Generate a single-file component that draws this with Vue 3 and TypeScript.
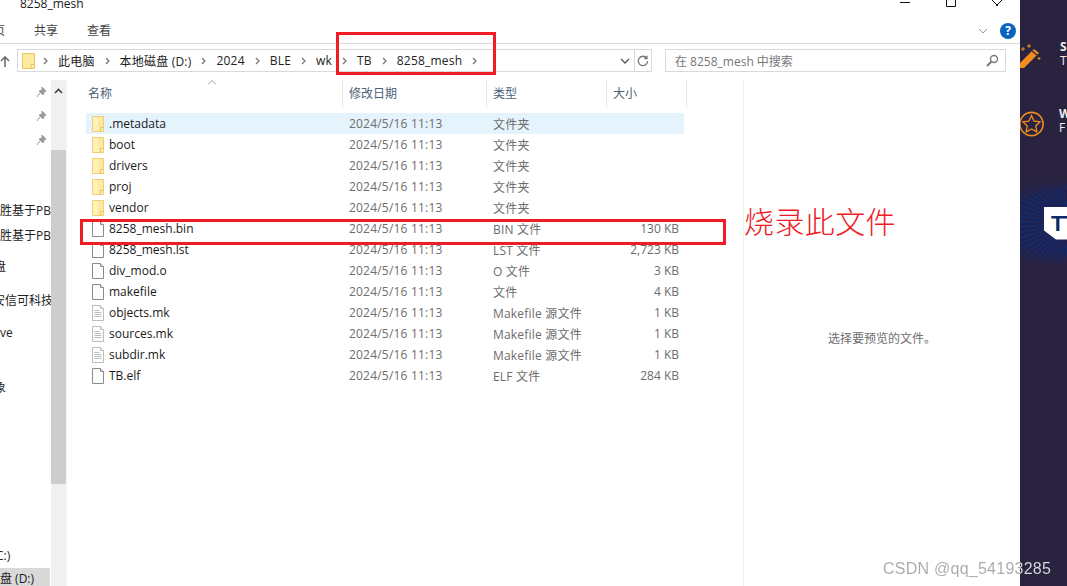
<script setup lang="ts">
type Row = { name: string; icon: 'folder' | 'file' | 'text'; type: string; size: string }

const date = '2024/5/16 11:13'
const crumbs = ['此电脑', '本地磁盘 (D:)', '2024', 'BLE', 'wk', 'TB', '8258_mesh']

const rows: Row[] = [
  { name: '.metadata', icon: 'folder', type: '文件夹', size: '' },
  { name: 'boot', icon: 'folder', type: '文件夹', size: '' },
  { name: 'drivers', icon: 'folder', type: '文件夹', size: '' },
  { name: 'proj', icon: 'folder', type: '文件夹', size: '' },
  { name: 'vendor', icon: 'folder', type: '文件夹', size: '' },
  { name: '8258_mesh.bin', icon: 'file', type: 'BIN 文件', size: '130 KB' },
  { name: '8258_mesh.lst', icon: 'file', type: 'LST 文件', size: '2,723 KB' },
  { name: 'div_mod.o', icon: 'file', type: 'O 文件', size: '3 KB' },
  { name: 'makefile', icon: 'file', type: '文件', size: '4 KB' },
  { name: 'objects.mk', icon: 'text', type: 'Makefile 源文件', size: '1 KB' },
  { name: 'sources.mk', icon: 'text', type: 'Makefile 源文件', size: '1 KB' },
  { name: 'subdir.mk', icon: 'text', type: 'Makefile 源文件', size: '1 KB' },
  { name: 'TB.elf', icon: 'file', type: 'ELF 文件', size: '284 KB' },
]

// 左侧导航只露出一截文字，gap 是和上一项的距离
const navItems = [
  { label: '胜基于PB', gap: 123, left: 0 },
  { label: '胜基于PB', gap: 9, left: 0 },
  { label: '盘', gap: 15, left: -6 },
  { label: '安信可科技', gap: 18, left: -7 },
  { label: 've', gap: 16, left: 0 },
  { label: '象', gap: 39, left: -6 },
  { label: 'C:)', gap: 152, left: -4 },
]
</script>

<template>
  <div class="screen">
    <div class="window">
      <div class="titlebar">
        <span class="title">8258_mesh</span>
        <div class="win-btns">
          <svg width="12" height="4" viewBox="0 0 12 4"><path d="M1 2.500h10" stroke="#111" fill="none" /></svg>
          <svg width="12" height="8" viewBox="0 0 12 8"><path d="M1.500 0v6.500h9V0" stroke="#111" fill="none" /></svg>
          <svg width="12" height="8" viewBox="0 0 12 8"><path d="M1 0l6 6M11 0l-6 6" stroke="#111" fill="none" /></svg>
        </div>
      </div>

      <div class="ribbon">
        <span class="tab tab-cut">页</span>
        <span class="tab">共享</span>
        <span class="tab">查看</span>
        <svg class="collapse" width="10" height="6" viewBox="0 0 10 6"><path d="M1 1l4 4 4-4" stroke="#9a9a9a" fill="none" /></svg>
        <span class="help">?</span>
      </div>

      <div class="addressrow">
        <svg class="up" width="10" height="13" viewBox="0 0 10 13"><path d="M5 12V2M1 6l4-4 4 4" stroke="#6f6f6f" stroke-width="1.6" fill="none" /></svg>
        <div class="address">
          <svg class="addr-folder" width="13" height="16" viewBox="0 0 13 16">
            <path d="M.5.5h12v15H.5z" fill="#fde9a0" stroke="#e9c45c" />
            <path d="M9 15.500v-4h3.500" fill="#fff6d0" stroke="#e9c45c" />
          </svg>
          <template v-for="c in crumbs" :key="c">
            <svg class="sep" width="5" height="8" viewBox="0 0 5 8"><path d="M1 1l3 3-3 3" stroke="#777" stroke-width="1.3" fill="none" /></svg>
            <span class="crumb">{{ c }}</span>
          </template>
          <svg class="sep" width="5" height="8" viewBox="0 0 5 8"><path d="M1 1l3 3-3 3" stroke="#777" stroke-width="1.3" fill="none" /></svg>
          <span class="grow"></span>
          <svg class="drop" width="10" height="6" viewBox="0 0 10 6"><path d="M1 1l4 4 4-4" stroke="#555" stroke-width="1.3" fill="none" /></svg>
          <span class="refresh">
            <svg width="12" height="12" viewBox="0 0 12 12"><path d="M9.800 3.200A4.700 4.700 0 1 0 10.700 6M10 .8v2.700H7.300" stroke="#777" stroke-width="1.300" fill="none" /></svg>
          </span>
        </div>
        <div class="search">
          <span class="search-text">在 8258_mesh 中搜索</span>
          <svg width="13" height="13" viewBox="0 0 13 13"><circle cx="8" cy="5" r="3.500" stroke="#777" stroke-width="1.400" fill="none" /><path d="M5.500 7.500L1 12" stroke="#777" stroke-width="2" /></svg>
        </div>
      </div>

      <div class="body">
        <aside class="nav">
          <svg v-for="n in 3" :key="n" class="pin" width="11" height="12" viewBox="0 0 11 12" :style="{ top: 6 + (n - 1) * 24 + 'px' }"><path d="M6 1l4 4-2 1-1 3-4-4 3-1zM4 7l-3 4" fill="#9b9b9b" stroke="#9b9b9b" /></svg>
          <div class="nav-list">
            <div v-for="(item, i) in navItems" :key="i" class="nav-item" :style="{ marginTop: item.gap + 'px', marginLeft: item.left + 'px' }">{{ item.label }}</div>
          </div>
          <div class="nav-selected"><span>盘 (D:)</span></div>
        </aside>

        <div class="scrollbar">
          <svg class="arrow" width="9" height="6" viewBox="0 0 9 6"><path d="M1 5l3.500-3.500L8 5" stroke="#444" stroke-width="1.600" fill="none" /></svg>
          <div class="thumb"></div>
        </div>

        <main class="list">
          <div class="head">
            <svg class="sort" width="10" height="5" viewBox="0 0 10 5"><path d="M1 4.500l4-4 4 4" stroke="#9a9a9a" fill="none" /></svg>
            <div class="h-cell c-name">名称</div>
            <div class="h-cell c-date">修改日期</div>
            <div class="h-cell c-type">类型</div>
            <div class="h-cell c-size">大小</div>
          </div>
          <div class="rows">
            <div v-for="(r, i) in rows" :key="r.name" class="row" :class="{ active: i === 0 }">
              <div class="cell c-name name">
                <svg v-if="r.icon === 'folder'" class="ficon" width="12" height="16" viewBox="0 0 12 16">
                  <path d="M.5.5h11v15H.5z" fill="#fde9a0" stroke="#efcf6f" />
                  <path d="M1 1h5v14H1z" fill="#fff0bc" stroke="none" />
                  <path d="M8.500 15.500v-4h3" fill="#fff3c6" stroke="#e6c35c" />
                </svg>
                <svg v-else class="ficon" width="12" height="16" viewBox="0 0 12 16" :class="{ light: r.icon === 'text' }">
                  <path d="M.5.5h8l3 3v12H.5z" fill="#fdfdfd" />
                  <path d="M8.500.5v3h3" fill="#eee" />
                  <path v-if="r.icon === 'text'" d="M2.500 5.500h5M2.500 7.500h7M2.500 9.500h7M2.500 11.500h7" />
                </svg>
                <span>{{ r.name }}</span>
              </div>
              <div class="cell c-date">{{ date }}</div>
              <div class="cell c-type">{{ r.type }}</div>
              <div class="cell c-size">{{ r.size }}</div>
            </div>
          </div>
        </main>

        <section class="preview">选择要预览的文件。</section>
      </div>
    </div>

    <div class="side">
      <div class="promo promo-first">
        <svg width="21" height="24" viewBox="0 0 21 24">
          <path d="M0 19L14 5l5 4L4 24H0z" fill="#f28c1c" />
          <path d="M12 7l5 4" stroke="#2a2340" stroke-width="1.200" />
          <path d="M3 3v4M1 5h4M9 0v4M7 2h4M19 13v3M17.500 14.500h3" stroke="#f28c1c" />
        </svg>
        <div class="promo-text"><b>S</b><span>T</span></div>
      </div>
      <div class="promo promo-second">
        <svg width="25" height="26" viewBox="0 0 25 26">
          <circle cx="12.500" cy="13" r="11.600" fill="none" stroke="#f28c1c" stroke-width="1.600" />
          <path d="M12.500 4.500l2.600 5.600 6 .7-4.400 4.100 1.200 6-5.400-2.900-5.400 2.900 1.200-6-4.400-4.100 6-.7z" fill="none" stroke="#f28c1c" stroke-width="1.300" />
        </svg>
        <div class="promo-text"><b>W</b><span>F</span></div>
      </div>
      <div class="band">
        <div class="badge">TT</div>
      </div>
    </div>

    <!-- 截图上手工加的红色标注 -->
    <div class="mark mark-path"></div>
    <div class="mark mark-file"></div>
    <div class="note">烧录此文件</div>
    <div class="watermark">CSDN @qq_54193285</div>
  </div>
</template>

<style>
html,
body {
  margin: 0;
  background: #fff;
}
</style>

<style scoped>
.screen {
  position: relative;
  display: flex;
  width: 1067px;
  height: 586px;
  overflow: hidden;
  font-family: "Open Sans", "Noto Sans CJK SC", sans-serif;
  font-size: 12px;
  color: #1a1a1a;
}

.window {
  width: 1020px;
  display: flex;
  flex-direction: column;
  background: #fff;
}

.titlebar {
  height: 11px;
  display: flex;
  align-items: flex-start;
  padding-left: 20px;
  overflow: hidden;
}
.title {
  line-height: 16px;
  margin-top: -4px;
}
.win-btns {
  margin-left: auto;
  display: flex;
  gap: 34px;
  margin-right: 17px;
  align-items: flex-start;
}

.ribbon {
  height: 33px;
  box-sizing: border-box;
  border-bottom: 1px solid #dadada;
  display: flex;
  align-items: center;
  padding-top: 7px;
}
.tab {
  margin-left: 29px;
  margin-top: -1px;
  color: #444;
}
.tab-cut {
  margin-left: -7px;
}
.collapse {
  margin-left: auto;
  margin-right: 12px;
  margin-top: 1px;
}
.help {
  width: 16px;
  height: 16px;
  margin-right: 4px;
  margin-top: 1px;
  border-radius: 50%;
  background: #0a63bd;
  color: #fff;
  font-weight: 700;
  font-size: 12px;
  line-height: 16px;
  text-align: center;
}

.addressrow {
  height: 36px;
  display: flex;
  align-items: flex-start;
  padding-top: 5px;
  box-sizing: border-box;
}
.up {
  margin-top: 6px;
  margin-right: 7px;
}
.address {
  width: 635px;
  height: 23px;
  box-sizing: border-box;
  border: 1px solid #d9d9d9;
  display: flex;
  align-items: center;
}
.addr-folder {
  margin-left: 4px;
  margin-right: -2px;
}
.sep {
  margin: 0 10px;
  flex: none;
}
.crumb {
  color: #222;
  white-space: nowrap;
  letter-spacing: 0.2px;
}
.grow {
  flex: 1;
}
.drop {
  margin-right: 4px;
}
.refresh {
  width: 16px;
  height: 21px;
  border-left: 1px solid #d9d9d9;
  display: flex;
  align-items: center;
  justify-content: center;
}
.search {
  width: 341px;
  height: 23px;
  margin-left: 13px;
  box-sizing: border-box;
  border: 1px solid #d9d9d9;
  display: flex;
  align-items: center;
  justify-content: space-between;
  padding: 0 6px 0 9px;
  color: #777;
}

.body {
  flex: 1;
  display: flex;
  min-height: 0;
}
.nav {
  position: relative;
  width: 51px;
  overflow: hidden;
  flex: none;
}
.pin {
  position: absolute;
  left: 36px;
}
.nav-list {
  height: 100%;
  white-space: nowrap;
}
.nav-item {
  line-height: 16px;
  color: #222;
}
.nav-selected {
  position: absolute;
  left: 0;
  right: 1px;
  bottom: 0;
  height: 18px;
  background: #d9d9d9;
  line-height: 22px;
}

.scrollbar {
  width: 15px;
  flex: none;
  background: #f0f0f0;
  display: flex;
  flex-direction: column;
  align-items: center;
  padding-top: 8px;
  box-sizing: border-box;
}
.thumb {
  width: 100%;
  height: 334px;
  margin-top: 56px;
  background: #cdcdcd;
}

.list {
  width: 677px;
  flex: none;
  padding-left: 19px;
  box-sizing: border-box;
  border-left: 1px solid #f4f4f4;
  position: relative;
}
.head {
  height: 27px;
  display: flex;
  margin-bottom: 6px;
}
.sort {
  position: absolute;
  left: 140px;
  top: 0;
}
.h-cell {
  line-height: 28px;
  color: #4c607a;
  border-right: 1px solid #e5e5e5;
  box-sizing: border-box;
  height: 27px;
}
.c-name {
  width: 257px;
  padding-left: 3px;
  box-sizing: border-box;
}
.h-cell.c-name {
  padding-left: 2px;
}
.c-date {
  width: 144px;
  padding-left: 6px;
  box-sizing: border-box;
}
.c-type {
  width: 120px;
  padding-left: 6px;
  box-sizing: border-box;
}
.c-size {
  width: 80px;
  padding-left: 6px;
  box-sizing: border-box;
}
.rows {
  width: 598px;
}
.row {
  display: flex;
  height: 21px;
  align-items: center;
  color: #6d6d6d;
}
.row.active {
  background: #e5f3fd;
}
.cell {
  white-space: nowrap;
}
.row .c-date,
.row .c-type {
  letter-spacing: 0.2px;
}
.name {
  display: flex;
  align-items: center;
  gap: 5px;
  color: #1a1a1a;
}
.ficon {
  flex: none;
  margin-left: 3px;
  stroke: #8a8a8a;
}
.ficon.light {
  stroke: #bdbdbd;
}
.row .c-size {
  width: 77px;
  padding: 0 5px 0 0;
  text-align: right;
}

.preview {
  flex: 1;
  border-left: 1px solid #f0f0f0;
  display: flex;
  align-items: center;
  justify-content: center;
  color: #6d6d6d;
  padding-top: 10px;
}

.side {
  flex: 1;
  background: #2a2340;
  color: #eee;
  display: flex;
  flex-direction: column;
  overflow: hidden;
}
.promo {
  display: flex;
  gap: 19px;
  height: 24px;
}
.promo svg,
.promo-text {
  flex: none;
}
.promo-first {
  margin-top: 44px;
}
.promo-second {
  margin-top: 43px;
  margin-left: -1px;
  gap: 15px;
}
.promo-text {
  display: flex;
  flex-direction: column;
  font-size: 12px;
  line-height: 14px;
  margin-top: -4px;
}
.band {
  margin-top: 48px;
  height: 80px;
  background:
    radial-gradient(ellipse 90px 46px at 50px 40px, transparent 65%, #2a2340 100%),
    repeating-conic-gradient(from 0deg at 50px 40px, #152a68 0 3deg, #211f4b 3deg 6deg);
  display: flex;
  align-items: center;
  padding-left: 24px;
}
.badge {
  flex: none;
  width: 60px;
  height: 33px;
  box-sizing: border-box;
  background: #fff;
  color: #0b2a66;
  font-weight: 700;
  font-size: 22px;
  line-height: 34px;
  padding-left: 7px;
  letter-spacing: -1px;
  clip-path: polygon(0 0, 100% 0, 100% 100%, 12px 100%, 0 24px);
  font-family: "Liberation Sans", sans-serif;
}

.mark {
  position: absolute;
  border: 3px solid #ee1c25;
  box-sizing: border-box;
}
.mark-path {
  left: 336px;
  top: 32px;
  width: 160px;
  height: 43px;
}
.mark-file {
  left: 80px;
  top: 219px;
  width: 646px;
  height: 26px;
}
.note {
  position: absolute;
  left: 744px;
  top: 202px;
  font-size: 30px;
  line-height: 36px;
  letter-spacing: 0.4px;
  color: #ee1c25;
  font-family: "Noto Sans CJK SC", sans-serif;
  font-weight: 300;
}
.watermark {
  position: absolute;
  left: 883px;
  top: 559px;
  width: 184px;
  font-family: "Liberation Sans", sans-serif;
  font-size: 16px;
  line-height: 20px;
  letter-spacing: 0.25px;
  background: linear-gradient(90deg, #a9a9a9 137px, #dcdcdc 137px);
  -webkit-background-clip: text;
  background-clip: text;
  color: transparent;
}
</style>
